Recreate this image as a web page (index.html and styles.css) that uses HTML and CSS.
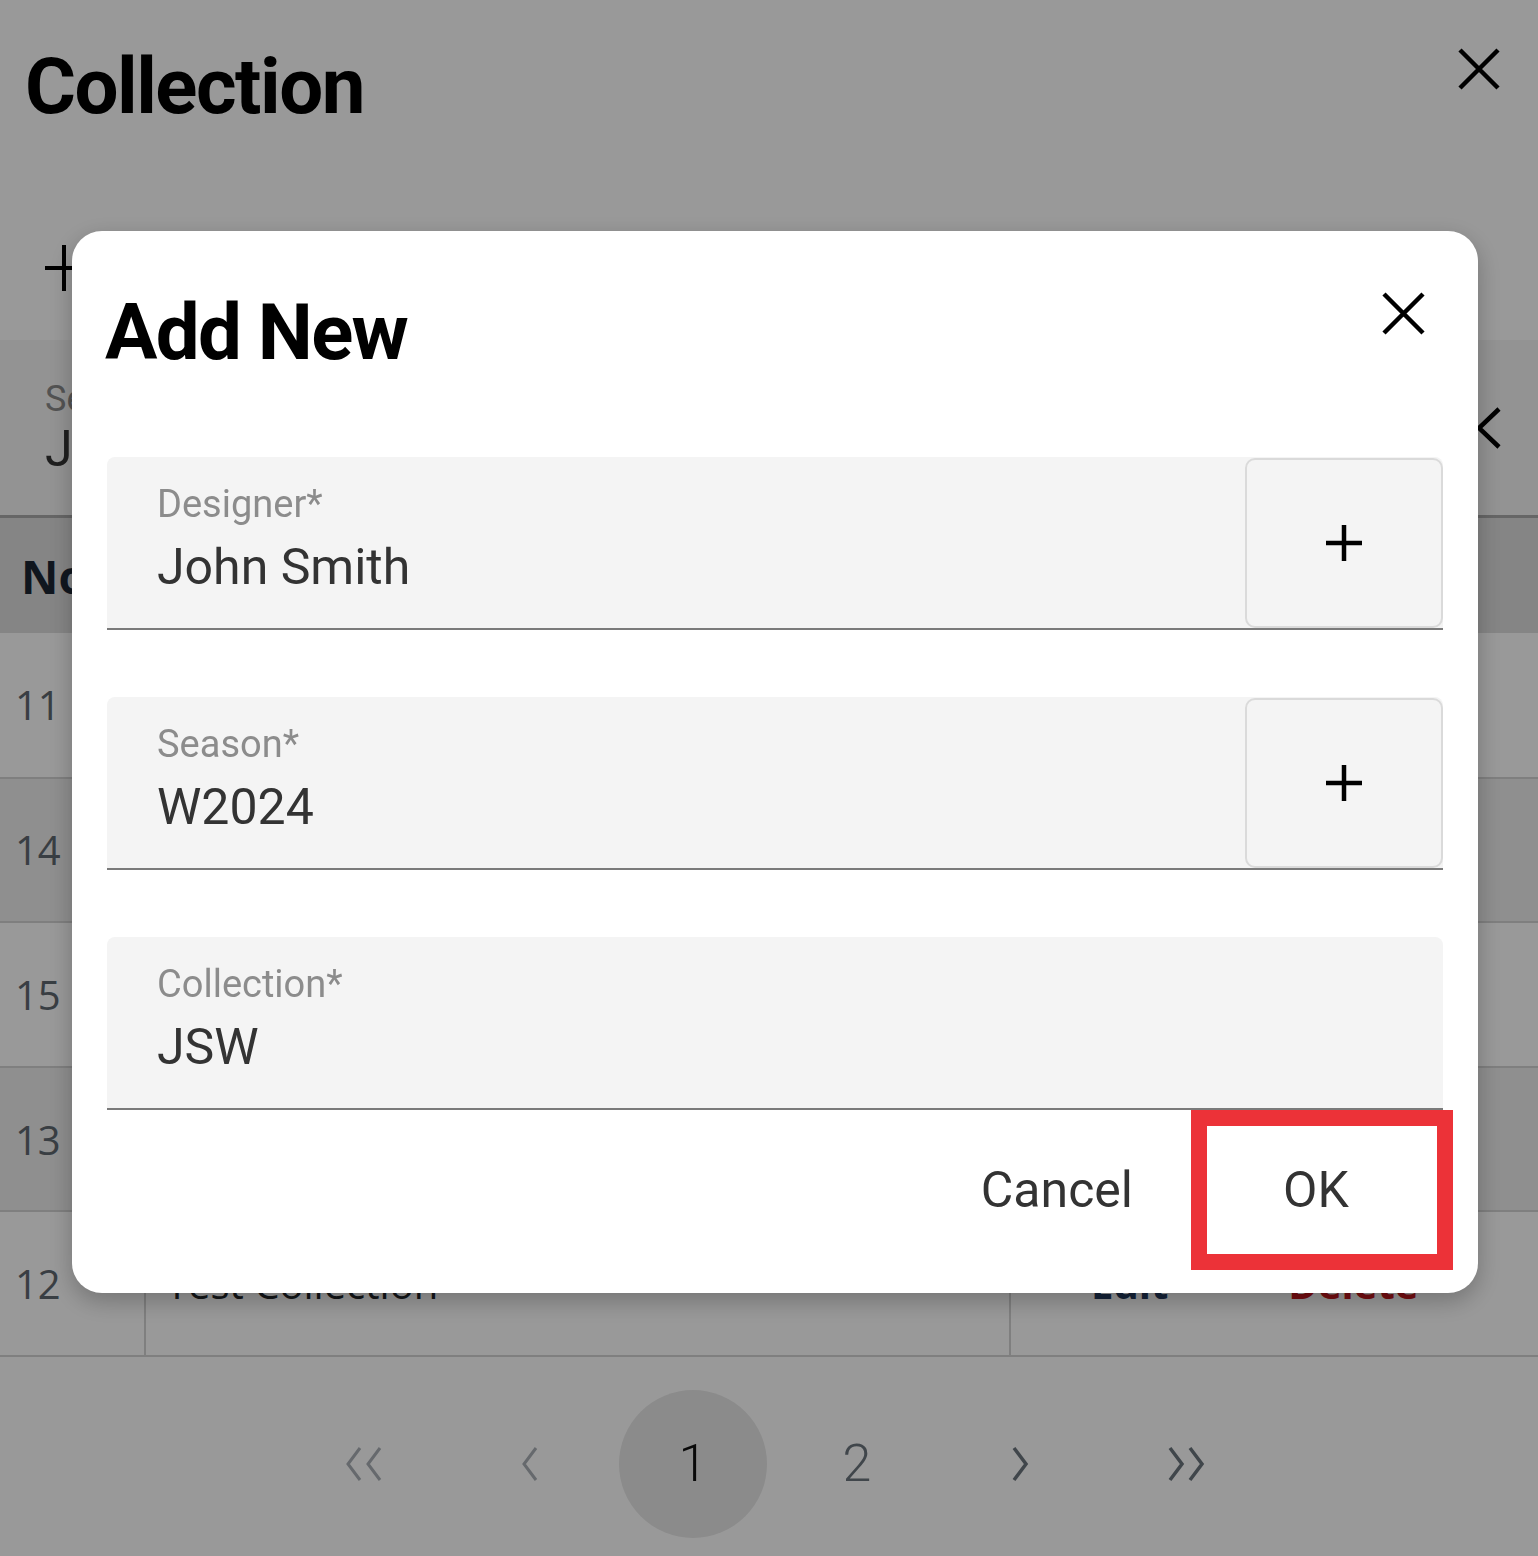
FILE: index.html
```html
<!DOCTYPE html>
<html lang="en">
<head>
<meta charset="UTF-8">
<meta name="viewport" content="width=device-width, initial-scale=1.0">
<title>Collection</title>
<link rel="stylesheet" href="styles.css">
</head>
<body>

  <div class="page">
    <header class="page-head">
      <h1 class="page-title">Collection</h1>
      <button class="icon-btn page-close" aria-label="Close">
        <svg width="44" height="44" viewBox="0 0 44 44"><path d="M3 3L41 41M41 3L3 41" stroke="#000" stroke-width="4.5" fill="none"/></svg>
      </button>
    </header>

    <div class="toolbar">
      <svg width="46" height="46" viewBox="0 0 46 46"><path d="M0 23H46M19 0V46" stroke="#000" stroke-width="4" fill="none"/></svg>
    </div>

    <div class="filter">
      <div class="filter-field">
        <span class="filter-label">Season</span>
        <span class="filter-value">John Smith</span>
      </div>
      <svg class="filter-toggle" width="26" height="42" viewBox="0 0 26 42"><path d="M23 2L3 21L23 40" stroke="#000" stroke-width="4.5" fill="none"/></svg>
    </div>

    <table class="grid">
      <thead>
        <tr><th class="col-no">No</th><th></th><th class="col-act"></th></tr>
      </thead>
      <tbody>
        <tr><td>11</td><td></td><td class="col-act"></td></tr>
        <tr><td>14</td><td></td><td class="col-act"></td></tr>
        <tr><td>15</td><td></td><td class="col-act"></td></tr>
        <tr><td>13</td><td></td><td class="col-act"></td></tr>
        <tr><td>12</td><td class="col-name">Test Collection</td><td class="col-act"><span class="act-edit">Edit</span><span class="act-del">Delete</span></td></tr>
      </tbody>
    </table>

    <nav class="pager">
      <span class="pager-item off">
        <svg width="42" height="36" viewBox="0 0 42 36"><path d="M16 2L4 18L16 34M36 2L24 18L36 34" stroke="currentColor" stroke-width="3" fill="none"/></svg>
      </span>
      <span class="pager-item off">
        <svg width="22" height="36" viewBox="0 0 22 36"><path d="M18 2L6 18L18 34" stroke="currentColor" stroke-width="3" fill="none"/></svg>
      </span>
      <span class="pager-item current">1</span>
      <span class="pager-item">2</span>
      <span class="pager-item">
        <svg width="22" height="36" viewBox="0 0 22 36"><path d="M4 2L16 18L4 34" stroke="currentColor" stroke-width="3.5" fill="none"/></svg>
      </span>
      <span class="pager-item">
        <svg width="42" height="36" viewBox="0 0 42 36"><path d="M6 2L18 18L6 34M26 2L38 18L26 34" stroke="currentColor" stroke-width="3.5" fill="none"/></svg>
      </span>
    </nav>
  </div>

  <div class="backdrop"></div>

  <div class="dialog-layer">
    <div class="dialog">
      <div class="dialog-head">
        <h2 class="dialog-title">Add New</h2>
        <button class="icon-btn dialog-close" aria-label="Close">
          <svg width="43" height="43" viewBox="0 0 43 43"><path d="M2 2L41 41M41 2L2 41" stroke="#000" stroke-width="4.5" fill="none"/></svg>
        </button>
      </div>

      <div class="field">
        <div class="field-body">
          <label class="field-label">Designer*</label>
          <div class="field-value">John Smith</div>
        </div>
        <button class="field-add" aria-label="Add designer">
          <svg width="36" height="36" viewBox="0 0 36 36"><path d="M0 18H36M18 0V36" stroke="#000" stroke-width="4.5" fill="none"/></svg>
        </button>
      </div>

      <div class="field">
        <div class="field-body">
          <label class="field-label">Season*</label>
          <div class="field-value">W2024</div>
        </div>
        <button class="field-add" aria-label="Add season">
          <svg width="36" height="36" viewBox="0 0 36 36"><path d="M0 18H36M18 0V36" stroke="#000" stroke-width="4.5" fill="none"/></svg>
        </button>
      </div>

      <div class="field field-last">
        <div class="field-body">
          <label class="field-label">Collection*</label>
          <div class="field-value">JSW</div>
        </div>
      </div>

      <div class="dialog-actions">
        <button class="text-btn">Cancel</button>
        <button class="text-btn ok-btn">OK</button>
      </div>
    </div>
  </div>

</body>
</html>
```

FILE: styles.css
```css
* {
  box-sizing: border-box;
}

body {
  margin: 0;
  width: 1538px;
  height: 1556px;
  overflow: hidden;
  background-color: #fff;
  color: #212529;
  font-family: Roboto, "Noto Sans", sans-serif;
}

.icon-btn {
  background: none;
  border: none;
  padding: 0;
  cursor: pointer;
  line-height: 0;
}

/* page under the dialog */
.page-head {
  height: 230px;
  display: flex;
  justify-content: space-between;
  align-items: flex-start;
  padding: 0 37px 0 25px;
}
.page-title {
  margin: 0;
  padding-top: 48px;
  font-size: 78px;
  letter-spacing: -1.5px;
  line-height: 1;
  font-weight: 700;
  color: #000;
}
.page-close {
  margin-top: 47px;
}

.toolbar {
  height: 110px;
  padding: 15px 0 0 45px;
}

.filter {
  height: 178px;
  background-color: #f5f5f5;
  border-bottom: 3px solid #aaa;
  display: flex;
  justify-content: space-between;
  align-items: center;
  padding: 0 36px 0 45px;
}
.filter-field {
  display: flex;
  flex-direction: column;
  white-space: nowrap;
}
.filter-label {
  font-size: 36px;
  color: #8a8a8a;
}
.filter-value {
  font-size: 50px;
  color: #333;
}

.grid {
  width: 100%;
  border-collapse: collapse;
  font-family: "Open Sans", sans-serif;
  font-size: 40px;
  color: #5f6870;
}
.grid th {
  height: 115px;
  background-color: #dedede;
  text-align: left;
  padding: 0 0 0 21px;
  font-size: 46px;
  color: #1c2633;
}
.grid td {
  height: 144.6px;
  padding: 0 0 0 15px;
  border-bottom: 2px solid #d4d4d4;
  border-left: 2px solid #d4d4d4;
}
.grid td:first-child {
  border-left: none;
}
.grid .col-no {
  width: 145px;
}
.grid .col-act {
  width: 528px;
}
.grid tbody tr:nth-child(even) td {
  background-color: #eee;
}
.grid td.col-name {
  padding-left: 20px;
  color: #212529;
}
.grid td.col-act {
  padding-left: 80px;
  font-weight: 700;
}
.act-edit {
  color: #233a5e;
  margin-right: 120px;
}
.act-del {
  color: #c4161c;
}

.pager {
  display: flex;
  gap: 16px;
  padding: 33px 0 0 291px;
  font-size: 52px;
  font-weight: 300;
  color: #6c757d;
}
.pager-item {
  width: 148px;
  height: 148px;
  border-radius: 50%;
  display: flex;
  align-items: center;
  justify-content: center;
}
.pager-item.off {
  color: #aab0b6;
}
.pager-item.current {
  background-color: #e8e8e8;
  color: #111;
}

/* dialog */
.backdrop {
  position: fixed;
  inset: 0;
  background-color: rgba(0, 0, 0, 0.4);
}
.dialog-layer {
  position: fixed;
  inset: 0;
  padding: 231px 0 0 72px;
}
.dialog {
  width: 1406px;
  background-color: #fff;
  border-radius: 30px;
  padding: 0 35px 23px;
  box-shadow: 0 8px 24px rgba(0, 0, 0, 0.25);
}
.dialog-head {
  height: 226px;
  display: flex;
  justify-content: space-between;
  align-items: flex-start;
}
.dialog-title {
  margin: 0 0 0 -2px;
  padding-top: 63px;
  font-size: 78px;
  letter-spacing: -1.7px;
  line-height: 1;
  font-weight: 700;
  color: #000;
}
.dialog-close {
  margin: 61px 18px 0 0;
}

.field {
  height: 173px;
  display: flex;
  background-color: #f4f4f4;
  border-bottom: 2px solid #7a7a7a;
  border-radius: 8px 8px 0 0;
  margin-bottom: 67px;
}
.field-last {
  margin-bottom: 0;
}
.field-body {
  flex: 1;
  padding: 24px 50px 0;
}
.field-label {
  display: block;
  font-size: 38px;
  line-height: 46px;
  color: #8c8c8c;
}
.field-value {
  margin-top: 5px;
  font-size: 50px;
  line-height: 70px;
  color: #333;
}
.field-add {
  width: 198px;
  margin-top: 1px;
  background-color: #f4f4f4;
  border: 2px solid #dadada;
  border-radius: 10px;
  display: flex;
  align-items: center;
  justify-content: center;
  cursor: pointer;
}

.dialog-actions {
  height: 160px;
  display: flex;
  justify-content: flex-end;
  align-items: center;
  margin-right: -10px;
}
.text-btn {
  background: none;
  border: none;
  font-family: Roboto, sans-serif;
  font-size: 50px;
  color: #333;
  cursor: pointer;
  padding: 0;
}
.text-btn + .text-btn {
  margin-left: 58px;
}
.ok-btn {
  width: 262px;
  height: 160px;
  padding-right: 12px;
  border: 16px solid #ec3238;
}
```
